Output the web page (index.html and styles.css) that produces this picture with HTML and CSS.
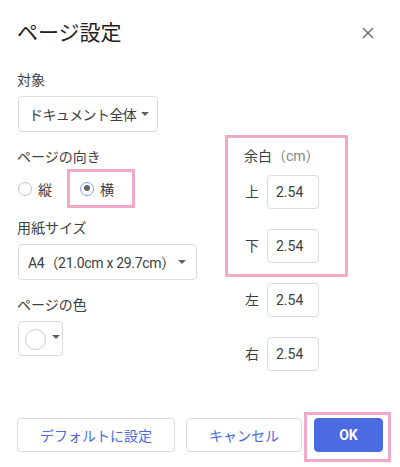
FILE: index.html
```html
<!DOCTYPE html>
<html lang="ja">
<head>
<meta charset="utf-8">
<title>ページ設定</title>
<link rel="stylesheet" href="styles.css">
</head>
<body>
<div class="dialog">
  <div class="header">
    <h1 class="title">ページ設定</h1>
    <svg class="close" width="12" height="12" viewBox="0 0 12 12"><path d="M1 1 L11 11 M11 1 L1 11" stroke="#5f6368" stroke-width="1.4" fill="none"/></svg>
  </div>
  <div class="content">
    <div class="col-left">
      <div class="label">対象</div>
      <div class="select select-doc"><span class="doc-text">ドキュメント全体</span><span class="arrow"></span></div>

      <div class="label label-gap">ページの向き</div>
      <div class="radios">
        <div class="radio-opt"><span class="radio"></span><span>縦</span></div>
        <div class="radio-opt hl-radio"><span class="radio checked"></span><span>横</span></div>
      </div>

      <div class="label label-gap2">用紙サイズ</div>
      <div class="select select-size"><span class="size-text">A4（21.0cm x 29.7cm）</span><span class="arrow"></span></div>

      <div class="label label-gap">ページの色</div>
      <div class="color-btn"><span class="swatch"></span><span class="arrow"></span></div>
    </div>
    <div class="col-right">
      <div class="hl-margins">
        <div class="label">余白<span class="unit">（cm）</span></div>
        <div class="mrow first"><span class="mlabel">上</span><div class="input">2.54</div></div>
        <div class="mrow"><span class="mlabel">下</span><div class="input">2.54</div></div>
      </div>
      <div class="mrow outside first-out"><span class="mlabel">左</span><div class="input">2.54</div></div>
      <div class="mrow outside"><span class="mlabel">右</span><div class="input">2.54</div></div>
    </div>
  </div>
  <div class="footer">
    <button class="btn btn-default">デフォルトに設定</button>
    <button class="btn btn-cancel">キャンセル</button>
    <span class="hl-ok"><button class="btn btn-ok">OK</button></span>
  </div>
</div>
</body>
</html>
```
FILE: styles.css
```css
* { box-sizing: border-box; }
html, body {
  margin: 0;
  padding: 0;
  background: #ffffff;
}
body {
  width: 400px;
  height: 467px;
  overflow: hidden;
  font-family: Roboto, "Noto Sans CJK JP", sans-serif;
  color: #3c4043;
  font-size: 14px;
}
.dialog {
  padding: 0 0 0 18px;
}
.header {
  display: flex;
  justify-content: space-between;
  align-items: center;
  padding-top: 18px;
  padding-right: 26px;
  height: 48px;
}
.title {
  margin: 0;
  font-size: 21px;
  font-weight: 400;
  line-height: 30px;
  color: #202124;
  margin-left: -1px;
}
.close {
  display: block;
  margin-top: -1px;
}
.content {
  display: flex;
  margin-top: 22px;
}
.col-left {
  width: 207px;
  display: flex;
  flex-direction: column;
  align-items: flex-start;
}
.label {
  line-height: 20px;
  height: 20px;
  margin-left: -1px;
  margin-bottom: 6px;
  white-space: nowrap;
}
.label-gap { margin-top: 15px; }
.label-gap2 { margin-top: 10px; }
.select {
  display: flex;
  align-items: center;
  height: 36px;
  border: 1px solid #dadce0;
  border-radius: 4px;
  padding: 0 5px 0 10px;
  white-space: nowrap;
}
.select-doc { width: 140px; }
.doc-text { letter-spacing: -0.6px; }
.select-doc .arrow { margin-left: 5px; }
.select-size { width: 179px; padding-left: 9px; padding-right: 10px; }
.size-text { letter-spacing: -0.3px; }
.select-size .arrow { margin-left: auto; }
.arrow {
  display: inline-block;
  flex: none;
  width: 0;
  height: 0;
  border-left: 4px solid transparent;
  border-right: 4px solid transparent;
  border-top: 4px solid #5f6368;
}
.radios {
  display: flex;
  align-items: center;
  margin-top: -4px;
  height: 39px;
}
.radio-opt {
  display: flex;
  align-items: center;
  gap: 6px;
}
.radio {
  display: inline-block;
  width: 14px;
  height: 14px;
  border: 1.5px solid #c4c7c5;
  border-radius: 50%;
  position: relative;
}
.radio.checked {
  border-color: #7b9cf0;
}
.radio.checked::after {
  content: "";
  position: absolute;
  left: 2.5px;
  top: 2.5px;
  width: 6px;
  height: 6px;
  border-radius: 50%;
  background: #5f6368;
}
.hl-radio {
  margin-left: 15px;
  height: 39px;
  border: 3px solid #f2a8c7;
  padding: 0 18px 0 10px;
}
.color-btn {
  display: flex;
  align-items: center;
  width: 45px;
  height: 35px;
  border: 1px solid #dadce0;
  border-radius: 4px;
  padding-left: 6px;
}
.swatch {
  display: inline-block;
  width: 21px;
  height: 21px;
  border: 1px solid #c8cacd;
  border-radius: 50%;
  background: #fff;
  margin-top: 2px;
}
.color-btn .arrow { margin-left: 6px; margin-top: -3px; }

.col-right {
  margin-top: 65px;
  display: flex;
  flex-direction: column;
}
.hl-margins {
  width: 123px;
  border: 3px solid #f2a8c7;
  padding: 8px 0 11px 17px;
}
.unit { color: #80868b; }
.mrow {
  display: flex;
  align-items: center;
  margin-top: 20px;
}
.mrow.first { margin-top: 9px; }
.mrow.first-out { margin-top: 6px; }
.outside { padding-left: 20px; }
.mlabel {
  width: 14px;
  margin-right: 8px;
  line-height: 20px;
}
.input {
  width: 52px;
  height: 34px;
  border: 1px solid #dadce0;
  border-radius: 4px;
  padding-left: 8px;
  line-height: 32px;
  font-size: 14px;
  color: #3c4043;
}
.footer {
  display: flex;
  align-items: flex-start;
  margin-top: 41px;
  margin-left: -1px;
}
.btn {
  font-family: Roboto, "Noto Sans CJK JP", sans-serif;
  font-size: 14px;
  height: 34px;
  border: 1px solid #dadce0;
  border-radius: 4px;
  background: #fff;
  color: #4a6bdc;
  padding: 0;
  margin-top: 6px;
}
.btn-default { width: 158px; }
.btn-cancel { width: 116px; margin-left: 11px; }
.hl-ok {
  display: inline-block;
  margin-left: 2px;
  border: 3px solid #f2a8c7;
  padding: 3px 5px 7px 7px;
}
.btn-ok {
  display: block;
  margin-top: 0;
  width: 69px;
  background: #4a6be2;
  border-color: #4a6be2;
  color: #fff;
  font-weight: 700;
}
```
